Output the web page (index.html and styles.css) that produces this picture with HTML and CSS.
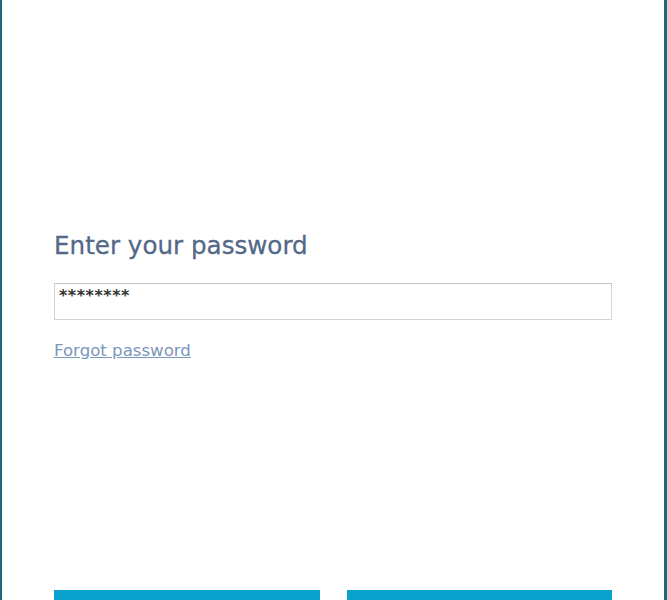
FILE: index.html
```html
<!DOCTYPE html>
<html>
<head>
<meta charset="utf-8">
<link rel="stylesheet" href="styles.css">
</head>
<body>
<div class="frame">
  <div class="content">
    <h1 class="title">Enter your password</h1>
    <div class="input">********</div>
    <a class="forgot" href="#">Forgot password</a>
    <div class="buttons">
      <div class="btn"></div>
      <div class="btn"></div>
    </div>
  </div>
</div>
</body>
</html>
```
FILE: styles.css
```css
html, body {
  margin: 0;
  padding: 0;
  background: #fff;
  overflow: hidden;
}
.frame {
  width: 667px;
  height: 600px;
  box-sizing: border-box;
  border-left: 2px solid #1d6a7c;
  border-right: 3px solid #1d6a7c;
  overflow: hidden;
}
.content {
  padding: 229px 52px 0 52px;
  display: flex;
  flex-direction: column;
}
.title {
  margin: 0;
  font-family: "DejaVu Sans", sans-serif;
  font-weight: normal;
  font-size: 24.6px;
  line-height: 34px;
  color: #546888;
  -webkit-text-stroke: 0.3px #546888;
}
.input {
  margin-top: 20px;
  height: 37px;
  box-sizing: border-box;
  border: 1px solid #d4d4d4;
  border-top-color: #c2c2c2;
  padding: 4px 4px;
  font-family: "DejaVu Sans", sans-serif;
  font-weight: bold;
  font-size: 16px;
  line-height: 16px;
  letter-spacing: 0.5px;
  color: #333;
}
.forgot {
  margin-top: 20px;
  align-self: flex-start;
  font-family: "DejaVu Sans", sans-serif;
  font-size: 16.6px;
  line-height: 22px;
  color: #7a96ba;
  text-decoration: underline;
}
.buttons {
  margin-top: 228px;
  display: flex;
  gap: 27px;
}
.btn {
  width: 266px;
  height: 40px;
  background: #0aa1cd;
}
```
